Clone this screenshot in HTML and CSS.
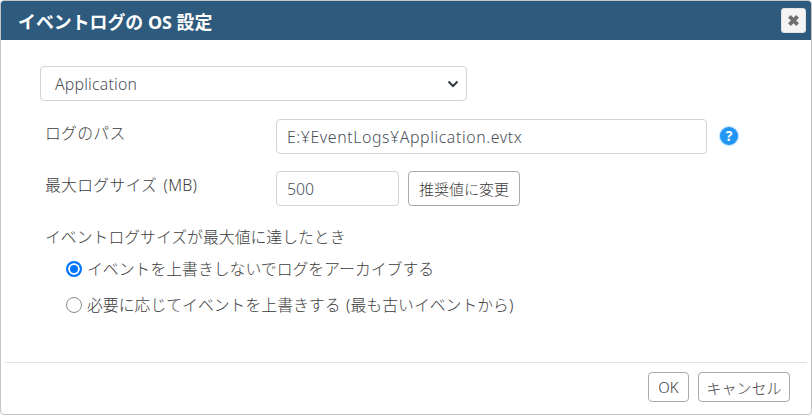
FILE: index.html
```html
<!DOCTYPE html>
<html lang="ja">
<head>
<meta charset="utf-8">
<title>イベントログの OS 設定</title>
<link rel="stylesheet" href="styles.css">
</head>
<body>
<div class="dialog">
  <header class="titlebar">
    <h1 class="title">イベントログの OS 設定</h1>
    <button class="close" type="button" aria-label="閉じる">
      <svg width="13" height="13" viewBox="0 0 13 13"><path d="M2.4 2.4 10.6 10.6M10.6 2.4 2.4 10.6" fill="none" stroke="#707070" stroke-width="3.8"/></svg>
    </button>
  </header>
  <main class="body">
    <div class="select-box">
      <span class="select-value">Application</span>
      <svg class="chevron" width="12" height="8" viewBox="0 0 12 8"><path d="M1.5 1.5 6 6 10.5 1.5" fill="none" stroke="#343a40" stroke-width="2"/></svg>
    </div>
    <div class="row row-path">
      <label class="label">ログのパス</label>
      <div class="field field-path">E:¥EventLogs¥Application.evtx</div>
      <span class="help">?</span>
    </div>
    <div class="row row-size">
      <label class="label">最大ログサイズ (MB)</label>
      <div class="field field-size">500</div>
      <button class="btn btn-default" type="button">推奨値に変更</button>
    </div>
    <p class="group-title">イベントログサイズが最大値に達したとき</p>
    <div class="radio-row radio-first"><span class="radio checked"></span><span>イベントを上書きしないでログをアーカイブする</span></div>
    <div class="radio-row radio-second"><span class="radio"></span><span class="radio-text-wide">必要に応じてイベントを上書きする (最も古いイベントから)</span></div>
  </main>
  <footer class="footer">
    <button class="btn btn-ok" type="button">OK</button>
    <button class="btn btn-cancel" type="button">キャンセル</button>
  </footer>
</div>
</body>
</html>
```
FILE: styles.css
```css
* { box-sizing: border-box; }
html, body { margin: 0; padding: 0; background: #fff; }
body {
  width: 812px;
  height: 415px;
  overflow: hidden;
  font-family: "Noto Sans", "Noto Sans CJK JP", sans-serif;
  font-size: 15.85px;
  font-weight: 300;
  color: #3c3c3c;
}
.dialog {
  width: 812px;
  height: 415px;
  display: flex;
  flex-direction: column;
  border: 1px solid #c4c4c4;
  border-radius: 4px;
}
.titlebar {
  height: 39px;
  flex: none;
  background: #2e5b7d;
  border-radius: 3px 3px 0 0;
  display: flex;
  align-items: center;
  justify-content: space-between;
  padding: 0 5px 0 17px;
}
.title {
  margin: 0;
  font-size: 17.9px;
  font-weight: 700;
  color: #fff;
}
.close {
  width: 25px;
  height: 25px;
  padding: 0;
  border: 1px solid #e2e2e2;
  border-radius: 3px;
  background: #f4f4f4;
  display: flex;
  align-items: center;
  justify-content: center;
}
.body {
  flex: 1;
  padding: 26px 0 0 39px;
}
.select-box {
  width: 427px;
  height: 35px;
  border: 1px solid #ced4da;
  border-radius: 4px;
  padding: 0 7px 0 14px;
  display: flex;
  align-items: center;
  justify-content: space-between;
  color: #495057;
}
.select-value { letter-spacing: 0.2px; }
.row {
  display: flex;
  align-items: flex-start;
}
.row-path { margin-top: 18px; }
.row-size { margin-top: 17px; }
.label {
  width: 236px;
  padding: 2px 0 0 5px;
  flex: none;
  line-height: 24px;
  letter-spacing: 0.25px;
  word-spacing: 2px;
}
.field {
  height: 35px;
  border: 1px solid #ced4da;
  border-radius: 4px;
  padding: 0 10px;
  display: flex;
  align-items: center;
  color: #495057;
}
.field-path { width: 431px; letter-spacing: 0.6px; }
.field-size { width: 123px; }
.help {
  margin: 8px 0 0 13px;
  width: 18px;
  height: 18px;
  border-radius: 50%;
  background: #2196f3;
  box-shadow: 0 0 1px 1px rgba(33, 150, 243, 0.35);
  color: #fff;
  font-weight: 700;
  font-size: 14px;
  line-height: 18px;
  text-align: center;
}
.btn {
  font: inherit;
  font-size: 15px;
  color: #3c3c3c;
  background: #fff;
  border: 1px solid #aaa;
  border-radius: 4px;
  padding: 0;
}
.btn-default { width: 112px; height: 35px; margin-left: 9px; }
.group-title { margin: 20px 0 0 5px; line-height: 22px; }
.radio-row {
  display: flex;
  align-items: center;
  gap: 5px;
  margin-left: 26px;
  line-height: 22px;
}
.radio-text-wide { word-spacing: 1.5px; }
.radio-first { margin-top: 10px; }
.radio-second { margin-top: 14px; }
.radio {
  width: 16px;
  height: 16px;
  flex: none;
  border: 1px solid #8a8a8a;
  border-radius: 50%;
  background: #fff;
}
.radio.checked {
  border: 2px solid #0075ff;
  background: #0075ff;
  box-shadow: inset 0 0 0 2px #fff;
}
.footer {
  flex: none;
  height: 52px;
  margin: 0 4px;
  border-top: 1px solid #dee2e6;
  display: flex;
  justify-content: flex-end;
  gap: 9px;
  padding: 9px 17px 0 0;
}
.btn-ok { width: 41px; height: 30px; }
.btn-cancel { width: 92px; height: 30px; }
```
